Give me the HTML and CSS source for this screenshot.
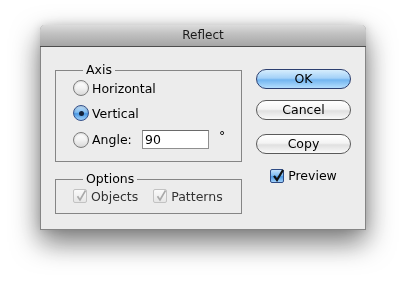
FILE: index.html
```html
<!DOCTYPE html>
<html>
<head>
<meta charset="utf-8">
<link rel="stylesheet" href="styles.css">
</head>
<body>
<div class="stage">
<div class="window">
  <div class="titlebar">Reflect</div>
  <div class="content">
    <div class="left">
      <fieldset class="group axis">
        <legend>Axis</legend>
        <div class="row r1"><span class="radio"></span><span>Horizontal</span></div>
        <div class="row r2"><span class="radio on"></span><span>Vertical</span></div>
        <div class="row r3"><span class="radio"></span><span class="angle-label">Angle:</span><span class="input">90</span><span class="deg">°</span></div>
      </fieldset>
      <fieldset class="group options">
        <legend>Options</legend>
        <div class="row checks">
          <span class="check-item"><span class="cb disabled"><svg viewBox="0 0 14 14" width="14" height="14"><path d="M3.5 7.2 L6 11 L11.5 1.5" fill="none" stroke="#a9a9a9" stroke-width="1.6"/></svg></span><span class="dim">Objects</span></span>
          <span class="check-item"><span class="cb disabled"><svg viewBox="0 0 14 14" width="14" height="14"><path d="M3.5 7.2 L6 11 L11.5 1.5" fill="none" stroke="#a9a9a9" stroke-width="1.6"/></svg></span><span class="dim">Patterns</span></span>
        </div>
      </fieldset>
    </div>
    <div class="right">
      <div class="btn default">OK</div>
      <div class="btn cancel">Cancel</div>
      <div class="btn copy">Copy</div>
      <div class="preview"><span class="cb on"><svg viewBox="0 0 14 14" width="14" height="14"><path d="M3 6.8 L6 11 L12 1" fill="none" stroke="#111" stroke-width="2.2"/></svg></span><span>Preview</span></div>
    </div>
  </div>
</div>
</div>
</body>
</html>
```
FILE: styles.css
```css
html, body {
  margin: 0;
  padding: 0;
  background: #ffffff;
}
body {
  font-family: "DejaVu Sans", "Liberation Sans", sans-serif;
  font-size: 12.5px;
  color: #000;
}
.stage {
  width: 406px;
  height: 285px;
  padding: 25px 0 0 40px;
  box-sizing: border-box;
}
.window {
  width: 326px;
  height: 205px;
  box-sizing: border-box;
  background: #ececec;
  border: 1px solid #858585;
  border-top: none;
  border-radius: 5px 5px 0 0;
  filter: drop-shadow(0 12px 14px rgba(0,0,0,0.5)) drop-shadow(0 0 4px rgba(0,0,0,0.14));
  display: flex;
  flex-direction: column;
}
.titlebar {
  margin: 0 -1px;
  height: 21px;
  line-height: 21px;
  text-align: center;
  font-size: 12px;
  color: #1a1a1a;
  background: linear-gradient(#dcdcdc, #c2c2c2 40%, #a5a5a5);
  border-bottom: 1px solid #4d4d4d;
  border-radius: 5px 5px 0 0;
}
.content {
  display: flex;
  padding: 0 14px 0 14px;
  gap: 14px;
}
.left {
  display: flex;
  flex-direction: column;
  padding-top: 15px;
}
.group {
  margin: 0;
  width: 187px;
  box-sizing: border-box;
  border: 1px solid #858585;
  padding: 0 0 0 17px;
  min-width: 0;
}
.group legend {
  margin-left: 10px;
  padding: 0 3px;
  line-height: 16px;
  height: 16px;
  font-size: 12.5px;
}
.axis {
  height: 100px;
}
.row {
  display: flex;
  align-items: center;
}
.r1 { height: 20px; }
.r2 { height: 20px; margin-top: 5px; }
.r3 { height: 21px; margin-top: 6px; }
.row .radio { margin-right: 3px; }
.radio {
  width: 16px;
  height: 16px;
  box-sizing: border-box;
  border-radius: 50%;
  border: 1px solid #7c7c7c;
  background: linear-gradient(#ffffff, #f2f2f2 50%, #d9d9d9);
  box-shadow: inset 0 1px 2px rgba(0,0,0,0.15);
  display: flex;
  align-items: center;
  justify-content: center;
  flex: none;
}
.radio.on {
  border-color: #34508a;
  background: linear-gradient(#c4e2fb, #7fbcf1 45%, #4a98e4 55%, #9fd0fa);
}
.radio.on::after {
  content: "";
  width: 5px;
  height: 5px;
  border-radius: 50%;
  background: #15223a;
}
.angle-label { width: 50px; }
.input {
  width: 67px;
  height: 19px;
  box-sizing: border-box;
  border: 1px solid #8f8f8f;
  border-top-color: #6a6a6a;
  background: #fff;
  line-height: 17px;
  padding-left: 2px;
  font-size: 12.5px;
}
.deg {
  margin-left: 10px;
  align-self: flex-start;
  line-height: 14px;
}
.options {
  margin-top: 9px;
  height: 43px;
}
.checks {
  height: 18px;
}
.check-item {
  display: flex;
  align-items: center;
}
.check-item + .check-item { margin-left: 15px; }
.cb {
  width: 14px;
  height: 14px;
  box-sizing: border-box;
  border-radius: 2px;
  flex: none;
  margin-right: 4px;
  position: relative;
}
.cb svg {
  position: absolute;
  left: 0;
  top: -1px;
}
.cb.disabled {
  border: 1px solid #c2c2c2;
  background: linear-gradient(#fafafa, #e6e6e6);
}
.dim { color: #333; }
.cb.on {
  border: 1px solid #2e4b84;
  background: linear-gradient(#c4e2fb, #7fbcf1 45%, #4a98e4 55%, #9fd0fa);
}
.right {
  display: flex;
  flex-direction: column;
  padding-top: 22px;
  width: 95px;
}
.btn {
  height: 20px;
  box-sizing: border-box;
  border-radius: 10px;
  border: 1px solid #5a5a5a;
  background: linear-gradient(#ffffff, #f4f4f4 45%, #e0e0e0 55%, #f9f9f9);
  text-align: center;
  line-height: 18px;
  color: #000;
}
.btn.default {
  border-color: #2c3f70;
  background: linear-gradient(#d6edfd, #a3d1f8 45%, #72b5f0 55%, #b4defe);
}
.cancel { margin-top: 11px; }
.copy { margin-top: 14px; }
.preview {
  margin-top: 14px;
  display: flex;
  align-items: center;
  justify-content: center;
  height: 15px;
}
.preview .cb { margin-right: 4px; }
```
